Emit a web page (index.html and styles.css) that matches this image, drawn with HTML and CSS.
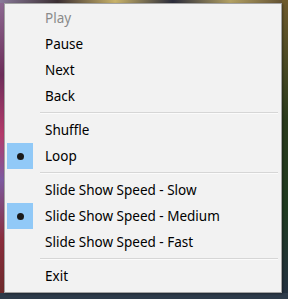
FILE: index.html
```html
<!DOCTYPE html>
<html>
<head>
<meta charset="utf-8">
<link rel="stylesheet" href="styles.css">
</head>
<body>
<div class="desktop">
  <div class="menu">
    <div class="item disabled"><span class="check"></span><span class="label">Play</span></div>
    <div class="item"><span class="check"></span><span class="label">Pause</span></div>
    <div class="item"><span class="check"></span><span class="label">Next</span></div>
    <div class="item"><span class="check"></span><span class="label">Back</span></div>
    <div class="sep"></div>
    <div class="item"><span class="check"></span><span class="label">Shuffle</span></div>
    <div class="item"><span class="check on"><span class="dot"></span></span><span class="label">Loop</span></div>
    <div class="sep"></div>
    <div class="item"><span class="check"></span><span class="label">Slide Show Speed - Slow</span></div>
    <div class="item"><span class="check on"><span class="dot"></span></span><span class="label">Slide Show Speed - Medium</span></div>
    <div class="item"><span class="check"></span><span class="label">Slide Show Speed - Fast</span></div>
    <div class="sep"></div>
    <div class="item"><span class="check"></span><span class="label">Exit</span></div>
  </div>
</div>
</body>
</html>
```
FILE: styles.css
```css
html, body {
  margin: 0;
  padding: 0;
}
.desktop {
  width: 288px;
  height: 299px;
  overflow: hidden;
  padding: 3px 0 0 4px;
  box-sizing: border-box;
  background:
    linear-gradient(to bottom, #2d3b4a 0, #2d3b4a 100%) bottom / 100% 6px no-repeat,
    linear-gradient(to bottom, #6e5a2c 0%, #2a3a1c 40%, #1f3a20 70%, #233041 100%) right / 6px 100% no-repeat,
    linear-gradient(to right, #8a7a9a 0%, #3b2f33 20%, #c9b36a 40%, #2b2c3b 60%, #b3a164 80%, #5b4a2e 100%) top / 100% 3px no-repeat,
    linear-gradient(to bottom, #8d6a93 0%, #6d2e5a 25%, #b43a6a 45%, #7c5aa0 60%, #8a2d3c 80%, #6a2a2a 100%);
  font-family: "Noto Sans", "Open Sans", sans-serif;
}
.menu {
  width: 278px;
  height: 290px;
  box-sizing: border-box;
  background: #f2f2f2;
  border: 1px solid #a3a3a3;
  padding: 1px 2px 3px 2px;
  box-shadow: 1px 1px 2px rgba(0,0,0,0.35);
}
.item {
  display: flex;
  align-items: center;
  height: 26px;
  font-size: 13.5px;
  color: #000;
}
.item.disabled {
  color: #8a8a8a;
}
.check {
  width: 26px;
  height: 26px;
  flex: none;
  display: flex;
  align-items: center;
  justify-content: center;
}
.check.on {
  background: #91c9f7;
}
.dot {
  width: 7px;
  height: 7px;
  border-radius: 50%;
  background: #1a1a1a;
}
.label {
  margin-left: 12px;
}
.sep {
  height: 8px;
  margin: 0 1px 0 33px;
  display: flex;
  align-items: center;
}
.sep::before {
  content: "";
  display: block;
  width: 100%;
  height: 1px;
  background: #d6d6d6;
  border-bottom: 1px solid #fbfbfb;
}
```
